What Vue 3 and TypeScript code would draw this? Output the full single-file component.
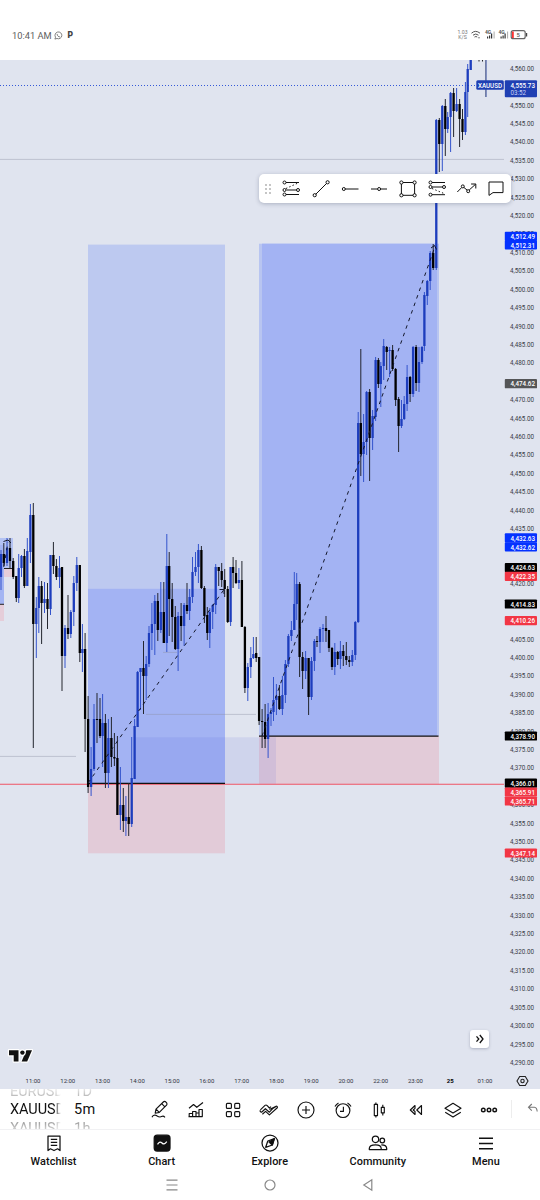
<script setup lang="ts">
type Candle = [x: number, high: number, top: number, bottom: number, low: number, up: 0 | 1]

const candles: Candle[] = [
  [1, 550, 554, 577, 590, 1], [3.8, 543, 554, 563, 567, 0], [7, 538, 548, 563, 566, 1], [10, 538, 548, 561, 568, 0],
  [13.2, 558, 561, 577, 579, 0], [16.3, 576, 576, 598, 602, 0], [18.7, 554, 568, 598, 603, 1], [21.5, 555, 556, 568, 577, 1],
  [24.4, 549, 556, 586, 588, 0], [27.3, 538, 551, 586, 586, 1], [30.4, 504, 515, 552, 563, 1], [33.3, 503, 515, 624, 748, 0],
  [36.3, 597, 608, 624, 658, 1], [38.8, 577, 586, 608, 633, 1], [41.6, 581, 586, 603, 644, 0], [44.5, 582, 599, 603, 613, 1],
  [47.5, 583, 599, 609, 629, 0], [50.5, 555, 555, 609, 615, 1], [53.4, 542, 555, 566, 574, 0], [56.4, 559, 566, 577, 580, 0],
  [59.5, 556, 568, 577, 588, 1], [62, 567, 567, 656, 691, 0], [65, 625, 628, 656, 668, 1], [68, 595, 628, 634, 639, 0],
  [70.8, 610, 612, 634, 638, 1], [73.8, 576, 583, 612, 626, 1], [76.8, 557, 565, 583, 591, 1], [79.8, 565, 565, 653, 662, 0],
  [82.4, 624, 649, 653, 672, 1], [85.1, 633, 649, 719, 752, 0], [88.1, 696, 719, 787, 793, 0], [91.1, 747, 769, 787, 796, 1],
  [94, 704, 719, 769, 771, 1], [97, 693, 719, 720, 743, 0], [100, 698, 719, 736, 738, 0], [102.6, 694, 723, 736, 767, 1],
  [105.4, 714, 723, 773, 788, 0], [108.4, 719, 738, 773, 788, 1], [111.4, 717, 738, 757, 767, 0], [114.4, 733, 757, 758.5, 766, 0],
  [117.4, 736, 758, 815, 815, 0], [120.4, 767, 805, 815, 830, 1], [123.3, 788, 805, 821, 832, 0], [125.9, 796, 817, 821, 836, 1],
  [128.7, 783, 817, 824, 836, 0], [131.7, 737, 778, 824, 827, 1], [134.6, 719, 726, 779, 779, 1], [137.6, 671, 672, 727, 727, 1],
  [140.5, 668, 668, 672, 710, 1], [143.5, 641, 668, 676, 714, 0], [146.2, 656, 664, 676, 700, 1], [149, 626, 633, 664, 667, 1],
  [151.9, 603, 624, 633, 650, 1], [154.8, 595, 601, 624, 655, 1], [157.8, 593, 601, 630, 641, 0], [160.8, 582, 612, 630, 633, 1],
  [163.8, 582, 612, 643, 643, 0], [166.8, 534, 566, 643, 652, 1], [169.2, 552, 566, 599, 636, 0], [172.2, 583, 599, 617, 642, 0],
  [175.3, 606, 617, 649, 650, 0], [178.1, 612, 616, 649, 671, 1], [181.1, 603, 616, 626, 641, 0], [184.1, 603, 605, 626, 646, 1],
  [187, 583, 605, 611, 614, 0], [189.6, 589, 597, 611, 620, 1], [192.5, 557, 572, 597, 603, 1], [195.5, 552, 567, 572, 576, 1],
  [198.4, 544, 550, 567, 583, 1], [201.4, 546, 550, 588, 589, 0], [204.4, 586, 588, 616, 623, 0], [207.3, 607, 615, 633, 640, 0],
  [209.8, 608, 612, 633, 648, 1], [212.7, 604, 605, 612, 629, 1], [215.7, 564, 567, 605, 614, 1], [218.7, 567, 567, 571, 586, 0],
  [221.7, 563, 571, 580, 587, 0], [224.7, 569, 580, 589, 597, 0], [227.7, 586, 589, 622, 623, 0], [230.6, 567, 567, 622, 626, 1],
  [233.1, 557, 567, 573, 588, 0], [236, 560, 573, 583, 584, 0], [238.9, 568, 580, 583, 589, 1], [241.9, 561, 580, 627, 627, 0],
  [244.9, 626, 627, 688, 693, 0], [247.8, 663, 667, 688, 701, 1], [250.8, 647, 658, 667, 678, 1], [253.4, 637, 654, 658, 659, 1],
  [256.2, 637, 653, 658, 662, 0], [259.1, 657, 657, 721, 725, 0], [262.1, 709, 721, 722, 748, 0], [265.1, 704, 722, 739, 748, 0],
  [268.1, 703, 714, 739, 758, 1], [271, 708, 712, 714, 726, 1], [273.5, 677, 700, 712, 721, 1], [276.4, 684, 696, 700, 715, 1],
  [279.4, 685, 696, 709, 710, 0], [282.4, 676, 695, 709, 715, 1], [285.4, 660, 664, 695, 703, 1], [288.4, 634, 636, 664, 667, 1],
  [291.4, 621, 630, 636, 641, 1], [294.3, 572, 604, 630, 630, 1], [296.7, 573, 584, 604, 620, 1], [299.6, 582, 584, 657, 677, 0],
  [302.6, 652, 657, 671, 689, 0], [305.6, 651, 658, 671, 679, 1], [308.6, 658, 658, 697, 715, 0], [311.5, 657, 661, 697, 700, 1],
  [314.4, 639, 641, 661, 671, 1], [317, 636, 641, 642, 647, 0], [320, 627, 629, 642, 653, 1], [323, 624, 628, 629, 642, 1],
  [326, 616, 628, 631, 642, 0], [329, 630, 630, 648, 652, 0], [332, 647, 648, 667, 670, 0], [334.8, 643, 652, 667, 675, 1],
  [337.7, 651, 652, 659, 665, 0], [340.4, 641, 651, 659, 669, 1], [343.3, 645, 651, 656, 666, 0], [346.3, 642, 656, 660, 665, 0],
  [349.3, 656, 660, 662, 667, 0], [352.3, 650, 655, 662, 666, 1], [355.3, 621, 622, 655, 660, 1], [358.2, 412, 423, 622, 623, 1],
  [360.8, 349, 423, 454, 476, 0], [363.6, 414, 442, 454, 482, 1], [366.6, 391, 392, 442, 455, 1], [369.6, 389, 392, 438, 481, 0],
  [372.6, 410, 416, 438, 450, 1], [375.6, 357, 360, 417, 421, 1], [378.4, 358, 360, 384, 388, 0], [380.8, 362, 366, 384, 407, 1],
  [383.7, 339, 346, 366, 380, 1], [386.7, 346, 347, 352, 370, 0], [389.6, 347, 350, 351, 377, 1], [392.6, 345, 350, 369, 371, 0],
  [395.6, 368, 369, 400, 406, 0], [398.6, 397, 399, 426, 452, 0], [401.5, 400, 419, 426, 428, 1], [404.2, 396, 404, 419, 420, 1],
  [407.1, 365, 377, 404, 411, 1], [410.1, 376, 377, 394, 402, 0], [413.1, 346, 347, 394, 397, 1], [416.1, 345, 347, 383, 391, 0],
  [419, 347, 362, 383, 392, 1], [422, 346, 347, 362, 364, 1], [424.4, 292, 295, 346, 351, 1], [427.3, 280, 281, 296, 305, 1],
  [430.2, 251, 253, 281, 290, 1], [433.2, 244, 253, 268, 270, 0], [436.3, 119, 120, 268, 270, 1], [439.3, 118, 120, 144, 172, 0],
  [442.3, 105, 106, 144, 171, 1], [445.3, 99, 106, 129, 156, 0], [447.7, 112, 117, 129, 133, 1], [450.6, 92, 93, 117, 152, 1],
  [453.6, 88, 93, 111, 137, 0], [456.6, 88, 104, 111, 112, 1], [459.6, 99, 104, 119, 147, 0], [462.5, 109, 119, 132, 140, 0],
  [465.4, 82, 92, 132, 135, 1], [467.7, 64, 69, 92, 117, 1], [470.7, 60, 60, 70, 70, 1],
]

const fmt = (n: number, d = 2) => n.toLocaleString('en-US', { minimumFractionDigits: d, maximumFractionDigits: d })
const ticks = Array.from({ length: 55 }, (_, i) => ({ y: 68 + i * 18.41, label: fmt(4560 - i * 5) })).filter((_, i) => i !== 1)

const badges: { y: number; label: string; fill: string }[] = [
  { y: 236.4, label: '4,512.49', fill: '#0432ff' }, { y: 244.8, label: '4,512.31', fill: '#0432ff' },
  { y: 383.7, label: '4,474.62', fill: '#545557' },
  { y: 537.9, label: '4,432.63', fill: '#0432ff' }, { y: 546.8, label: '4,432.62', fill: '#0432ff' },
  { y: 567.6, label: '4,424.63', fill: '#000' }, { y: 576.4, label: '4,422.35', fill: '#f23645' },
  { y: 604, label: '4,414.83', fill: '#000' }, { y: 620.6, label: '4,410.26', fill: '#f23645' },
  { y: 736, label: '4,378.90', fill: '#000' },
  { y: 783.2, label: '4,366.01', fill: '#000' }, { y: 792, label: '4,365.91', fill: '#f23645' }, { y: 801, label: '4,365.71', fill: '#f23645' },
  { y: 853, label: '4,347.14', fill: '#f23645' },
]

const times = ['11:00', '12:00', '13:00', '14:00', '15:00', '16:00', '17:00', '18:00', '19:00', '20:00', '22:00', '23:00', '25', '01:00']
  .map((label, i) => ({ label, x: 33 + i * 34.77 }))

const drawTools: string[] = [
  '<path d="M5 3.5H18M5.5 11H15.5M5 15.5H18"/><path stroke-dasharray="1.4 2.2" d="M5 9.5 17 4"/><circle cx="3.5" cy="3.5" r="1.5"/><circle cx="3.5" cy="11" r="1.5"/><circle cx="17" cy="11" r="1.5"/><circle cx="3.5" cy="15.5" r="1.5"/>',
  '<path d="M4.8 15.2 15.6 4.4"/><circle cx="3.7" cy="16.2" r="1.6"/><circle cx="16.6" cy="3.3" r="1.6"/>',
  '<path d="M5.2 10H18.500"/><circle cx="3.8" cy="10" r="1.5"/>',
  '<path d="M2 10H8.6M11.6 10H18"/><circle cx="10.1" cy="10" r="1.5"/>',
  '<path d="M5 3.5H15M5 16.3H15M3.4 5V15M16.6 5V15"/><circle cx="3.4" cy="3.5" r="1.6"/><circle cx="16.6" cy="3.5" r="1.6"/><circle cx="3.4" cy="16.3" r="1.6"/><circle cx="16.6" cy="16.3" r="1.6"/>',
  '<path d="M4 3.5H17M4 8H14.5M4 15.7H17"/><path stroke-dasharray="1.4 2.2" d="M4 9.5 16 14.5"/><circle cx="2.5" cy="3.5" r="1.5"/><circle cx="2.5" cy="8" r="1.5"/><circle cx="16" cy="8" r="1.5"/><circle cx="2.5" cy="15.7" r="1.5"/>',
  '<path d="M.3 13 4.700 8.5M6.700 8.3 10 11M12.200 11 18.500 5.3M14.100 5H18.800V9.5"/><circle cx="5.800" cy="7.4" r="1.5"/><circle cx="11.200" cy="12.2" r="1.5"/>',
  '<path d="M3 3H17V13.6H7L3 16.4Z"/>',
]

const mainTools: string[] = [
  '<path d="M5.2 13.2 6 9.2 13.3 2C14 1.3 15.4 1.5 16.2 2.3S17.3 4.5 16.5 5.2L9.3 12.4ZM11.7 3.6 14.9 6.8M6.3 9.4 9 12.2"/><path d="M2 17.3C3 15.2 5 14.7 6.5 15.6S9.5 17.8 11.5 16.6 14.2 16.5 15 17.3"/>',
  '<path d="M3 8.2 7.5 4.500 10.8 7.300 17 2.500M3.2 16.6V13.5H6.6V16.6M6.6 16.6V11.5H10V16.6M10 16.6V13H13V16.6M13 16.6V9.5H16.3V16.6ZM2.5 16.6H16.5"/>',
  '<rect x="3.4" y="3.400" width="5" height="5" rx="1"/><rect x="11.7" y="3.400" width="5" height="5" rx="1"/><rect x="3.4" y="11.6" width="5" height="5" rx="1"/><rect x="11.7" y="11.6" width="5" height="5" rx="1"/>',
  '<path d="M1.4 9.800 6 5.400C6.800 4.700 7.600 5 8.200 5.600L10.400 8 12 6.600M1.300 10.200C.6 11.400 2 12.700 3.100 11.700L6.400 8.700 10.400 12.200 14.200 8.200 17 6.500M3.400 14.300 6.600 11.400 10.400 14.900 18.300 7.800C18.800 6.700 17.800 5.800 16.600 6.400L10.400 9.600"/>',
  '<circle cx="10" cy="10" r="8"/><path d="M10 6V14M6 10H14"/>',
  '<circle cx="10" cy="10.6" r="6.9"/><path d="M10.4 6.8V11.4H7M2 6.6A8 8 0 0 1 5.5 2.9M14.5 2.9A8 8 0 0 1 18 6.6"/>',
  '<path d="M5.3 4.4H8.5V15.6H5.3ZM6.900 2.4V4.4M6.900 15.6V17.6M12.3 7.4H15.3V12.8H12.3ZM13.8 4.8V7.4M13.8 12.8V15.4"/>',
  '<path d="M9 5.5 4.3 10 9 14.5V11.5L7.2 10 9 8.3ZM15.5 5.5 10.8 10 15.5 14.5Z"/>',
  '<path d="M10 3.3 18 8.2 10 13 2 8.2ZM2.2 12.2 10 17 17.8 12.2"/>',
  '<g stroke-width="1.4"><circle cx="4.3" cy="10" r="1.8"/><circle cx="10" cy="10" r="1.8"/><circle cx="15.7" cy="10" r="1.8"/></g>',
]

const tabs: { label: string; icon: string }[] = [
  { label: 'Watchlist', icon: '<path d="M4 3H16V17.5L13.6 15.8 10 17.5 6.4 15.8 4 17.5ZM6.8 6.3H13.2M6.8 9.3H13.2M6.8 12.3H13.2"/>' },
  { label: 'Chart', icon: '<rect x="2.2" y="2.2" width="15.8" height="15.8" rx="3" fill="#111"/><path stroke="#fff" d="M5.5 11.3C7.5 8.5 8.5 8.5 10 10S12.5 11.5 14.8 8.7"/>' },
  { label: 'Explore', icon: '<circle cx="10" cy="10" r="8"/><path d="M14.3 5.7 12.3 12 5.7 14.3 7.8 8Z"/><path fill="#111" d="M14.3 5.7 12.3 12 9 9Z"/>' },
  { label: 'Community', icon: '<circle cx="7.5" cy="6.3" r="3.2"/><circle cx="14.3" cy="7.500" r="2.3"/><path d="M1.300 16.6V15.5C1.300 13.300 4 11.800 7.5 11.800S13.2 13.300 13.2 15.5V16.6ZM13.300 11.900C16.6 11.900 18.700 13 18.700 15.6V16.6H13.2"/>' },
  { label: 'Menu', icon: '<path stroke-width="1.5" d="M3 5.3H17M3 10.500H17M3 15.700H17"/>' },
]
</script>

<template>
  <div class="screen">
    <header class="status">
      <span class="clock">10:41 AM</span>
      <svg class="wa" viewBox="0 0 10 10"><path d="M1 9 1.700 6.900A3.800 3.800 0 1 1 3.300 8.300Z" /><path d="M3.500 3.300C3.500 5.300 5 6.700 6.800 6.600" /></svg>
      <b class="p">P</b>
      <span class="grow"></span>
      <span class="rate"><span>1.03</span><span>K/S</span></span>
      <svg class="sys" viewBox="456 27 74 14">
        <g fill="none" stroke="#555" stroke-width="1">
          <path d="M456.500 33.200Q460.500 29.500 465 33.200M458 35.200Q460.700 32.800 463.500 35.200M459.500 37Q461 36 462.200 37" />
        </g>
        <circle cx="464" cy="37.800" r=".8" fill="#777" />
        <g v-for="x in [470, 483.500]" :key="x">
          <text :x="x" y="34" class="lte">4G</text>
          <path :transform="`translate(${x} 0)`" d="M2 36.500h1.200v2H2zM4 35.500h1.200v3H4zM6 33.500h1.200v5H6z" fill="#333" />
          <path :transform="`translate(${x} 0)`" d="M8.600 31.500h1v7h-1z" fill="#aaa" />
        </g>
        <rect x="496.200" y="30.700" width="14" height="8" rx="2" fill="#fff" stroke="#666" stroke-width="1.200" />
        <rect x="497" y="31.500" width="1.800" height="6.500" fill="#f33" />
        <rect x="511" y="33" width="1.200" height="3.500" fill="#444" />
        <text x="501.500" y="36.900" class="pct">5</text>
      </svg>
    </header>

    <main class="chart">
      <svg class="plot" viewBox="0 60 540 1029">
        <rect y="60" width="540" height="1029" fill="#e0e4ef" />
        <rect x="0" y="538" width="13" height="30" fill="#b4c3f3" />
        <rect x="0" y="545" width="4" height="59" fill="#a4b5f3" />
        <rect x="4" y="568" width="9" height="9" fill="#e5cdd9" />
        <rect x="0" y="604" width="4" height="17" fill="#e5cdd9" />
        <path d="M4 568.500H13M0 604.300H4" stroke="#222" />
        <rect x="88" y="244.600" width="137" height="539" fill="#bdc9f0" />
        <rect x="88" y="588.800" width="137" height="194.500" fill="#a3b3f3" />
        <rect x="88" y="783.500" width="137" height="69.800" fill="#e2cbd8" />
        <rect x="259" y="243.700" width="180" height="492.300" fill="#b8c5f1" />
        <rect x="262" y="243.700" width="175" height="492.300" fill="#a3b3f3" />
        <rect x="259" y="736" width="180" height="48" fill="#e2cbd8" />
        <rect x="134" y="737.300" width="142" height="46.500" fill="#3a4fd8" fill-opacity=".1" />
        <path d="M0 159.400H504M0 756.400H76M146 714.400H256M163 652.400H177" stroke="#8a90a0" stroke-opacity=".45" stroke-width=".9" />
        <path d="M0 85.500H477" stroke="#3559d8" stroke-dasharray="1 2" />
        <path d="M0 784.200H504" stroke="#ef5364" stroke-width="1.100" />
        <path d="M88 783.400H225M259 736.200H438.500" stroke="#111" stroke-width="1.200" />
        <g v-for="(c, i) in candles" :key="i" :class="c[5] ? 'up' : 'down'">
          <rect class="wick" :x="c[0] - 0.5" :y="c[1]" width="1" :height="c[4] - c[1]" />
          <rect :x="c[0] - 1.150" :y="c[2]" width="2.300" :height="Math.max(c[3] - c[2], 0.9)" />
        </g>
        <path d="M486 60V97" stroke="#3f59bd" stroke-width="1" />
        <path d="M485.800 60V97" stroke="#4a4f60" stroke-width=".6" />
        <path d="M479 60V61.500M482.500 60V61.500" stroke="#222" />
        <g class="trend">
          <path d="M88 783 224 589.500M262 736 435 246.500M4 566 8 542" />
          <path class="solid" d="M219.500 589.500H224V594M431 248 434.500 245.500 436.500 249.500M3.500 541.500 8 540 11 543" />
        </g>

        <g class="ticks">
          <text v-for="t in ticks" :key="t.label" x="510" :y="t.y + 2.800" textLength="24" lengthAdjust="spacingAndGlyphs">{{ t.label }}</text>
        </g>
        <g v-for="b in badges" :key="b.label">
          <rect x="504.800" :y="b.y - 4.600" width="32.200" height="9.200" rx=".9" :fill="b.fill" />
          <text class="tag" x="510.500" :y="b.y + 2.700" textLength="24.500" lengthAdjust="spacingAndGlyphs">{{ b.label }}</text>
        </g>
        <rect x="504.800" y="80.300" width="32.200" height="17" rx="1" fill="#1f3fb3" />
        <text class="tag" x="510.500" y="87.500" textLength="24.500" lengthAdjust="spacingAndGlyphs">4,555.73</text>
        <text class="tag dim" x="510.500" y="94.900" textLength="15.500" lengthAdjust="spacingAndGlyphs">03:52</text>
        <rect x="476.300" y="80.300" width="27.500" height="9.400" rx="1.500" fill="#1f3fb3" />
        <text class="tag" x="478" y="87.600" textLength="24" lengthAdjust="spacingAndGlyphs">XAUUSD</text>

        <g class="times">
          <text v-for="t in times" :key="t.label" :x="t.x" y="1083.200" :class="{ day: t.label === '25' }">{{ t.label }}</text>
        </g>
        <g fill="none" stroke="#222" stroke-width="1.100">
          <path d="M519.700 1076.500H525.300L528 1081 525.300 1085.500H519.700L517 1081Z" />
          <circle cx="522.500" cy="1081" r="1.700" />
        </g>
        <g class="mark">
          <path d="M9 1050.300H18.500V1061.500H13.700V1055.200H9Z" />
          <path d="M26.400 1050.300H32L27.200 1061.500H21.600Z" />
          <circle cx="22.400" cy="1052.600" r="2.200" />
        </g>
      </svg>

      <div class="palette">
        <svg class="grip" viewBox="0 0 8 12"><g v-for="y in [2, 6, 10]" :key="y" fill="#aaa"><circle cx="2" :cy="y" r=".9" /><circle cx="6" :cy="y" r=".9" /></g></svg>
        <svg v-for="(t, i) in drawTools" :key="i" class="icon" viewBox="0 0 20 20" v-html="t"></svg>
      </div>
      <div class="jump"><svg viewBox="0 0 12 12"><path d="M2.500 3.300 4.800 6 2.500 8.700M5.800 2 9 6 5.800 10" /></svg></div>
    </main>

    <section class="toolbar">
      <div class="wheel sym"><span>EURUSD</span><strong>XAUUSD</strong><span>XAUUSD</span></div>
      <div class="wheel tf"><span>1D</span><strong>5m</strong><span>1h</span></div>
      <div class="tools">
        <svg v-for="(t, i) in mainTools" :key="i" class="icon" viewBox="0 0 20 20" v-html="t"></svg>
      </div>
      <i class="sep"></i>
      <svg class="undo" viewBox="0 0 12 14"><path d="M4.800 2 1.500 5.300 4.800 8.600M1.500 5.300H7.500Q9.800 5.500 10.200 9.500" /></svg>
    </section>

    <nav class="tabs">
      <div v-for="t in tabs" :key="t.label" class="tab">
        <svg class="icon" viewBox="0 0 20 20" v-html="t.icon"></svg>
        <span>{{ t.label }}</span>
      </div>
    </nav>
    <footer class="keys">
      <svg viewBox="0 0 14 14"><path d="M1.500 2.200H12.500M1.500 7H12.500M1.500 11.800H12.500" /></svg>
      <svg viewBox="0 0 14 14"><circle cx="7" cy="7" r="5" /></svg>
      <svg viewBox="0 0 14 14"><path d="M10.800 1.800V12.200L2.800 7Z" /></svg>
    </footer>
  </div>
</template>

<style>
body { margin: 0; background: #fff; }
</style>

<style scoped>
.screen { width: 540px; height: 1200px; overflow: hidden; display: flex; flex-direction: column; background: #fff; font-family: Roboto, "Liberation Sans", sans-serif; color: #111; }
.status { height: 60px; flex: none; padding: 10px 12px 0 12px; box-sizing: border-box; display: flex; align-items: center; color: #606060; }
.clock { font-size: 9.300px; width: 42px; white-space: nowrap; }
.wa { width: 9px; height: 9px; fill: none; stroke: #666; stroke-width: .9; }
.p { margin-left: 4.500px; font-size: 8.500px; font-weight: 900; color: #444; }
.grow { flex: 1; }
.rate { display: flex; flex-direction: column; align-items: center; font-size: 5.200px; line-height: 5.500px; color: #777; margin-right: 3px; width: 11px; }
.sys { width: 74px; height: 14px; margin-right: -17px; margin-top: -2px; }
.lte { font: 700 5px Roboto, sans-serif; fill: #555; }
.pct { font: 500 6px Roboto, sans-serif; fill: #555; }

.chart { position: relative; height: 1029px; flex: none; }
.plot { display: block; width: 540px; height: 1029px; }
.up rect { fill: #1d3dbd; }
.down rect { fill: #000; }
.up .wick { fill: #3454cc; }
.down .wick { fill: #24262f; }
.trend path { fill: none; stroke: #14182c; stroke-width: 1; stroke-dasharray: 3.600 4.400; }
.trend .solid { stroke-dasharray: none; }
.ticks text { font: 400 7.500px Roboto, sans-serif; fill: #3a3d47; }
.tag { font: 500 7.400px Roboto, sans-serif; fill: #fff; }
.tag.dim { font-weight: 400; fill: #c9d2f3; }
.times text { font: 400 6px Roboto, sans-serif; fill: #30333d; text-anchor: middle; }
.times .day { font-weight: 700; fill: #000; }
.mark { fill: #111; stroke: #fff; stroke-width: 2.400; paint-order: stroke; stroke-linejoin: round; }

.icon { fill: none; stroke: #111; stroke-width: 1.150; stroke-linejoin: round; width: 20px; height: 20px; display: block; flex: none; }
.palette { position: absolute; left: 259px; top: 114px; width: 252px; height: 29px; box-sizing: border-box; padding: 0 5px; background: #fff; border-radius: 5px; box-shadow: 0 1px 4px rgba(50, 60, 90, .3); display: flex; align-items: center; justify-content: space-between; }
.palette .icon { stroke-width: 1; }
.grip { width: 8px; height: 12px; }
.jump { position: absolute; left: 470px; top: 970px; width: 19px; height: 18px; border-radius: 3px; background: #fff; box-shadow: 0 1px 3px rgba(50, 60, 90, .3); display: grid; place-items: center; }
.jump svg { width: 12px; height: 12px; fill: none; stroke: #111; stroke-width: 1.300; }

.toolbar { height: 41px; flex: none; box-sizing: border-box; border-bottom: 1px solid #f1f1f3; display: flex; align-items: center; overflow: hidden; }
.wheel { height: 40px; box-sizing: border-box; padding-top: 2.500px; display: flex; flex-direction: column; justify-content: center; overflow: hidden; white-space: nowrap; font-size: 14.500px; line-height: 18.500px; }
.wheel span { color: #a8a8a8; }
.wheel strong { font-weight: 400; color: #111; }
.wheel span:first-child { -webkit-mask-image: linear-gradient(transparent 10%, #000 90%); mask-image: linear-gradient(transparent 10%, #000 90%); }
.wheel span:last-child { -webkit-mask-image: linear-gradient(#000 20%, transparent 90%); mask-image: linear-gradient(#000 20%, transparent 90%); }
.sym { width: 51px; margin-left: 10px; letter-spacing: -.05px; -webkit-mask-image: linear-gradient(90deg, #000 86%, transparent); mask-image: linear-gradient(90deg, #000 86%, transparent); }
.tf { width: 30px; margin-left: 13px; letter-spacing: .3px; }
.tools { margin-left: 45.500px; width: 350px; display: flex; justify-content: space-between; }
.tools .icon { margin-top: 1px; }
.sep { width: 1px; height: 18px; background: #ededed; margin-left: 11.500px; }
.undo { width: 12px; height: 14px; margin-left: 15px; fill: none; stroke: #777; stroke-width: 1.100; flex: none; }

.tabs { height: 40px; flex: none; display: flex; margin-left: -.5px; }
.tab { flex: 1; display: flex; flex-direction: column; align-items: center; padding-top: 3px; }
.tab .icon { stroke-width: 1.250; }
.tab span { font-size: 10.900px; font-weight: 500; line-height: 14px; margin-top: 2px; letter-spacing: .05px; }
.keys { height: 30px; display: flex; justify-content: center; align-items: center; gap: 84px; margin-left: -1px; margin-top: -.5px; }
.keys svg { width: 14px; height: 14px; fill: none; stroke: #888; stroke-width: 1.200; }
</style>
